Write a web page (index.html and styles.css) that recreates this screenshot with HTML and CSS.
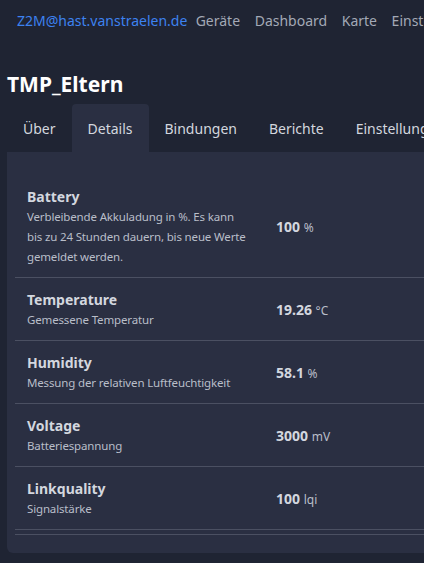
FILE: index.html
```html
<!DOCTYPE html>
<html lang="de">
<head>
<meta charset="utf-8">
<title>TMP_Eltern</title>
<link rel="stylesheet" href="styles.css">
</head>
<body>
<nav class="nav">
  <a class="brand">Z2M@hast.vanstraelen.de</a>
  <a class="nav-link">Geräte</a>
  <a class="nav-link">Dashboard</a>
  <a class="nav-link">Karte</a>
  <a class="nav-link">Einstellungen</a>
</nav>
<h1 class="title">TMP_Eltern</h1>
<div class="tabs">
  <div class="tab">Über</div>
  <div class="tab active">Details</div>
  <div class="tab">Bindungen</div>
  <div class="tab">Berichte</div>
  <div class="tab">Einstellungen</div>
</div>
<div class="card">
  <div class="row">
    <div class="label">
      <div class="name">Battery</div>
      <div class="desc">Verbleibende Akkuladung in %. Es kann bis zu 24 Stunden dauern, bis neue Werte gemeldet werden.</div>
    </div>
    <div class="value"><b>100</b> <span class="unit">%</span></div>
  </div>
  <div class="row">
    <div class="label">
      <div class="name">Temperature</div>
      <div class="desc">Gemessene Temperatur</div>
    </div>
    <div class="value"><b>19.26</b> <span class="unit">°C</span></div>
  </div>
  <div class="row">
    <div class="label">
      <div class="name">Humidity</div>
      <div class="desc">Messung der relativen Luftfeuchtigkeit</div>
    </div>
    <div class="value"><b>58.1</b> <span class="unit">%</span></div>
  </div>
  <div class="row">
    <div class="label">
      <div class="name">Voltage</div>
      <div class="desc">Batteriespannung</div>
    </div>
    <div class="value"><b>3000</b> <span class="unit">mV</span></div>
  </div>
  <div class="row">
    <div class="label">
      <div class="name">Linkquality</div>
      <div class="desc">Signalstärke</div>
    </div>
    <div class="value"><b>100</b> <span class="unit">lqi</span></div>
  </div>
  <div class="row empty"></div>
</div>
</body>
</html>
```
FILE: styles.css
```css
html, body {
  margin: 0;
  padding: 0;
  background: #1f2433;
  overflow: hidden;
}
body {
  font-family: "Noto Sans", "Open Sans", sans-serif;
  color: #d3d7df;
  width: 424px;
  height: 563px;
}
.nav {
  display: flex;
  align-items: center;
  height: 40px;
  padding-left: 17px;
  white-space: nowrap;
  font-size: 14px;
}
.brand {
  color: #3d82f0;
  margin-right: 1px;
}
.nav-link {
  color: #a3a9b6;
  padding: 0 7.3px;
}
.title {
  margin: 28px 0 0 7px;
  font-size: 21px;
  font-weight: 700;
  color: #ffffff;
  line-height: 32px;
}
.tabs {
  display: flex;
  margin: 4px 0 0 7px;
  white-space: nowrap;
  font-size: 14px;
}
.tab {
  height: 48px;
  line-height: 50px;
  padding: 0 16px;
  color: #d3d7df;
  border-radius: 4px 4px 0 0;
}
.tab.active {
  background: #2a2f42;
}
.card {
  margin-left: 7px;
  background: #2a2f42;
  border-radius: 0 0 0 6px;
  padding: 23px 0 20px 8px;
  height: 358px;
}
.row {
  display: flex;
  align-items: center;
  border-bottom: 1px solid #4b5062;
  padding: 11px 0 10px;
}
.row.empty {
  padding: 2px 0;
}
.label {
  width: 221px;
  padding: 0 12px;
  flex-shrink: 0;
}
.name {
  font-size: 14px;
  font-weight: 700;
  line-height: 21px;
  color: #d3d7df;
}
.desc {
  font-size: 11.5px;
  letter-spacing: -0.15px;
  line-height: 20px;
  color: #b9bec9;
}
.value {
  padding-left: 16px;
  font-size: 14px;
  color: #d3d7df;
}
.value b {
  font-weight: 700;
}
.unit {
  font-size: 12px;
  color: #b9bec9;
}
```
